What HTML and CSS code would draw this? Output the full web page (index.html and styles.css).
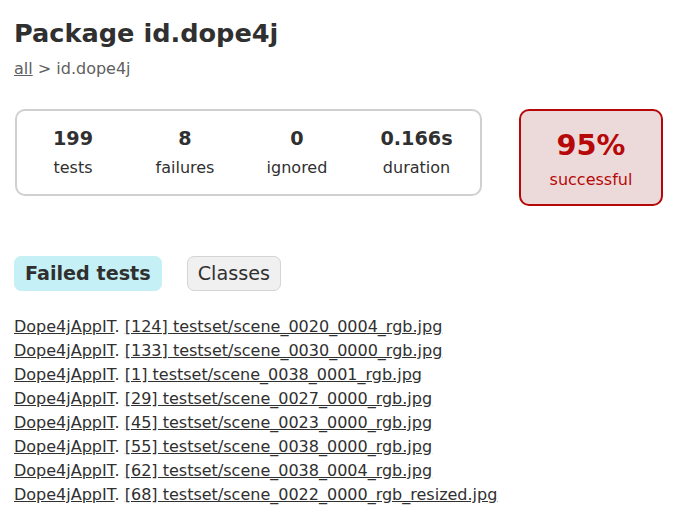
FILE: index.html
```html
<!DOCTYPE html>
<html>
<head>
<meta charset="utf-8">
<title>Test results - Package id.dope4j</title>
<link rel="stylesheet" href="styles.css">
</head>
<body>
<div class="content">
  <h1>Package id.dope4j</h1>
  <div class="breadcrumbs"><a href="#">all</a> &gt; id.dope4j</div>
  <div class="summary">
    <div class="summary-group">
      <div class="info-box"><div class="counter">199</div><p>tests</p></div>
      <div class="info-box"><div class="counter">8</div><p>failures</p></div>
      <div class="info-box"><div class="counter">0</div><p>ignored</p></div>
      <div class="info-box duration"><div class="counter">0.166s</div><p>duration</p></div>
    </div>
    <div class="info-box success-rate"><div class="percent">95%</div><p>successful</p></div>
  </div>
  <ul class="tab-links">
    <li class="selected"><a href="#">Failed tests</a></li>
    <li><a href="#">Classes</a></li>
  </ul>
  <ul class="link-list">
    <li><a href="#">Dope4jAppIT</a>. <a href="#">[124] testset/scene_0020_0004_rgb.jpg</a></li>
    <li><a href="#">Dope4jAppIT</a>. <a href="#">[133] testset/scene_0030_0000_rgb.jpg</a></li>
    <li><a href="#">Dope4jAppIT</a>. <a href="#">[1] testset/scene_0038_0001_rgb.jpg</a></li>
    <li><a href="#">Dope4jAppIT</a>. <a href="#">[29] testset/scene_0027_0000_rgb.jpg</a></li>
    <li><a href="#">Dope4jAppIT</a>. <a href="#">[45] testset/scene_0023_0000_rgb.jpg</a></li>
    <li><a href="#">Dope4jAppIT</a>. <a href="#">[55] testset/scene_0038_0000_rgb.jpg</a></li>
    <li><a href="#">Dope4jAppIT</a>. <a href="#">[62] testset/scene_0038_0004_rgb.jpg</a></li>
    <li><a href="#">Dope4jAppIT</a>. <a href="#">[68] testset/scene_0022_0000_rgb_resized.jpg</a></li>
  </ul>
</div>
</body>
</html>
```

FILE: styles.css
```css
body {
  margin: 0;
  padding: 0;
  font-family: "DejaVu Sans", sans-serif;
  font-size: 16px;
  color: #303030;
}

a, a:visited {
  color: #303030;
}

.content {
  padding: 1px 14px;
}

h1 {
  font-size: 25.6px;
  margin: 17px 0 11px;
  white-space: nowrap;
}

.breadcrumbs, .breadcrumbs a {
  color: #606060;
}

.summary {
  display: flex;
  align-items: flex-start;
  margin: 31px 0 40px;
  padding-left: 1px;
}

.summary-group {
  display: flex;
  flex-shrink: 0;
  border: 2px solid #d0d0d0;
  border-radius: 10px;
}

.info-box {
  width: 110px;
  flex-shrink: 0;
  margin: 0 1px;
  padding: 16px 0 17px;
  text-align: center;
}

.info-box p {
  margin: 0;
}

.info-box.duration {
  width: 125px;
}

.counter, .percent {
  font-size: 19.2px;
  font-weight: bold;
  margin-bottom: 8px;
}

.success-rate {
  width: 140px;
  margin-left: 37px;
  padding: 17px 0 15px;
  border: 2px solid #b60808;
  border-radius: 10px;
  background-color: #ecdada;
  color: #b60808;
}

.success-rate .percent {
  font-size: 28.8px;
}

.tab-links {
  display: flex;
  list-style: none;
  margin: 0;
  padding: 10px 0;
}

.tab-links li {
  padding: 5px 10px;
  margin-right: 25px;
  border: 1px solid #d4d4d4;
  border-radius: 7px;
  background-color: #f0f0f0;
}

.tab-links li.selected {
  background-color: #c5f0f5;
  border-color: #c5f0f5;
  font-weight: bold;
}

.tab-links a {
  display: block;
  font-size: 19.2px;
  text-decoration: none;
}

.link-list {
  margin: 16px 0;
  padding: 0;
  list-style: none;
}

.link-list li {
  margin-bottom: 5px;
  white-space: nowrap;
}
```
